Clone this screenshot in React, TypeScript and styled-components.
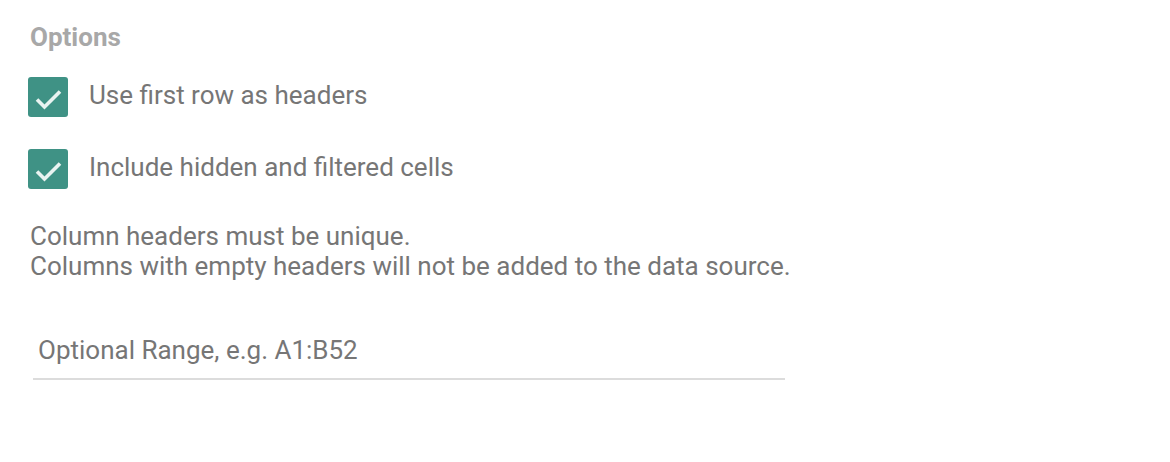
import React from "react";
import styled, { createGlobalStyle } from "styled-components";

const Global = createGlobalStyle`
  html, body { margin: 0; padding: 0; background: #ffffff; }
  body { font-family: Roboto, "Noto Sans", Arial, sans-serif; }
  *, *::before, *::after { box-sizing: border-box; }
`;

const Panel = styled.div`
  display: flex;
  flex-direction: column;
  padding: 22px 0 0 28px;
  width: 800px;
`;

const Heading = styled.div`
  font-size: 26px;
  font-weight: 700;
  color: #a8a8a8;
  line-height: 30px;
  padding-left: 2px;
`;

const OptionList = styled.div`
  display: flex;
  flex-direction: column;
  gap: 32px;
  margin-top: 25px;
`;

const OptionRow = styled.label`
  display: flex;
  align-items: center;
  gap: 21px;
  height: 40px;
  cursor: pointer;
`;

const Box = styled.span<{ $checked: boolean }>`
  width: 40px;
  height: 40px;
  border-radius: 3px;
  background: ${(p) => (p.$checked ? "#3f9285" : "#ffffff")};
  border: ${(p) => (p.$checked ? "none" : "2px solid #aaa")};
  display: flex;
  flex-shrink: 0;
`;

const OptionText = styled.span`
  font-size: 26px;
  color: #767676;
  line-height: 30px;
  margin-top: -4px;
`;

const Note = styled.p`
  margin: 32px 0 0 2px;
  font-size: 26px;
  line-height: 30px;
  color: #767676;
`;

const Field = styled.div`
  margin: 54px 0 0 5px;
  width: 752px;
  border-bottom: 2px solid #dcdcdc;
  padding: 0 0 13px 5px;
`;

const FieldInput = styled.input`
  border: none;
  outline: none;
  background: transparent;
  width: 100%;
  padding: 0;
  font-family: Roboto, "Noto Sans", Arial, sans-serif;
  font-size: 26px;
  line-height: 30px;
  height: 30px;
  color: #767676;
  &::placeholder { color: #767676; opacity: 1; }
`;

const Check = () => (
  <svg width="40" height="40" viewBox="0 0 40 40">
    <path d="M9 22.5l7.5 7.5L32 14.5" fill="none" stroke="#e9f3f1" strokeWidth="3.6" />
  </svg>
);

const Option = ({ label }: { label: string }) => (
  <OptionRow>
    <Box $checked>
      <Check />
    </Box>
    <OptionText>{label}</OptionText>
  </OptionRow>
);

export default function App() {
  return (
    <>
      <Global />
      <Panel>
        <Heading>Options</Heading>
        <OptionList>
          <Option label="Use first row as headers" />
          <Option label="Include hidden and filtered cells" />
        </OptionList>
        <Note>
          Column headers must be unique.
          <br />
          Columns with empty headers will not be added to the data source.
        </Note>
        <Field>
          <FieldInput placeholder="Optional Range, e.g. A1:B52" />
        </Field>
      </Panel>
    </>
  );
}
